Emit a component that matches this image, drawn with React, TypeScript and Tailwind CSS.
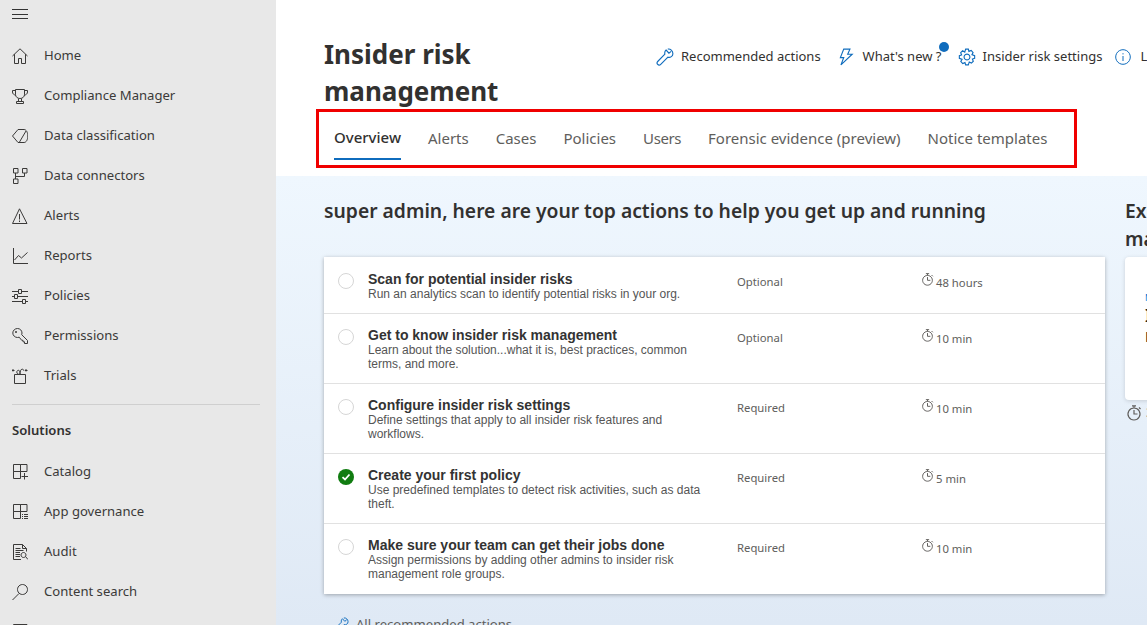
import type { ReactNode } from "react";

const Icon = ({ children, size = 16, className = "" }: { children: ReactNode; size?: number; className?: string }) => (
  <svg width={size} height={size} viewBox="0 0 16 16" fill="none" stroke="currentColor" strokeWidth="1" className={"shrink-0 " + className}>
    {children}
  </svg>
);

const navIcons: Record<string, ReactNode> = {
  home: <path d="M0.5 8L8 0.8L15.5 8M2.5 6.2V15.5H6.5V10.5H9.5V15.5H13.5V6.2" />,
  trophy: <path d="M3.5 1.5H12.5V6.5C12.5 8.8 10.5 10.5 8 10.5C5.5 10.5 3.5 8.8 3.5 6.5ZM3.5 2.5H0.5V4C0.5 5.7 1.8 6.9 4 7.2M12.5 2.5H15.5V4C15.5 5.7 14.2 6.9 12 7.2M6.5 10.5V13.5M9.5 10.5V13.5M4.5 13.5H11.5V15.5H4.5Z" />,
  tag: <path d="M0.5 8L6 1.5H12C14.4 1.5 15.8 4.6 15.8 8C15.8 11.4 14.4 14.5 12 14.5H6ZM7.5 14L14 3" />,
  connectors: <path d="M1.5 0.5H6V5H1.5ZM10.5 0.5H15V5H10.5ZM1.5 11H6V15.5H1.5ZM3.5 5V11M3.5 8.5H12.5V5" />,
  alert: <path d="M7.5 0.8L15 15.5H0.5ZM7.5 6V11.5M7.5 12.5V14" />,
  reports: <path d="M1.5 0V15.5H16M2.5 12L6.5 7.5L9.5 10L15.5 4.5" />,
  policies: <path d="M0 3.5H6.5M9.5 3.5H16M0 8.5H2.5M5.5 8.5H16M0 13.5H10.5M13.5 13.5H16M6.5 1.5H9.5V5.5H6.5ZM2.5 6.5H5.5V10.5H2.5ZM10.5 11.5H13.5V15.5H10.5Z" />,
  key: <path d="M5.5 0.5C8 0.5 10 2.5 10 5C10 5.6 9.9 6.2 9.7 6.7L15.5 12.5V15.5H12.5V13.8H11V12.3H9.7L7.2 9.2C6.7 9.4 6.1 9.5 5.5 9.5C3 9.5 0.8 7.5 0.8 5C0.8 2.5 3 0.5 5.5 0.5ZM3.5 3.5H4.5V4.5H3.5Z" />,
  trials: <path d="M2.5 6.5H13.5V15.5H2.5ZM1 1V3.5M0 2.5H2.5M14 1V3.5M13 2.5H15.5M8 6.5C6 6.5 4.8 5.5 4.8 4C4.8 3 5.6 2.3 6.5 2.3C7.5 2.3 8 3.4 8 6.5ZM8 6.5C8 3.4 8.6 1.2 10.2 1.2C11.3 1.2 11.8 2 11.8 2.8" />,
  catalog: <path d="M1.5 0.5H8.5V7.5H1.5ZM8.5 0.5H15V7.5H8.5ZM1.5 7.5H8.5V14.5H1.5ZM12.5 9V15.5M9.5 12.5H16" />,
  governance: <path d="M1.5 0.5H8.5V7.5H1.5ZM8.5 0.5H15V7.5H8.5ZM1.5 7.5H8.5V14.5H1.5ZM10 10.5H11M12 10.5H16M10 12.5H11M12 12.5H16M10 14.5H11M12 14.5H16" />,
  audit: <path d="M14.5 7.5V4.5L10.5 0.5H1.5V15.5H9M10.5 0.5V4.5H14.5M3.5 4.5H8.5M3.5 6.5H11.5M3.5 8.5H8M3.5 10.5H8M3.5 12.5H8M11.5 8.5A2.5 2.5 0 1 1 11.49 8.5ZM13.5 12.5L16 15.5" />,
  search: <path d="M10.5 0.5A5 5 0 1 1 10.49 0.5ZM7 9.5L0.5 16" />,
  box: <path d="M1.5 0.5H15V15H1.5Z" />,
};

const topNav = [
  ["home", "Home"],
  ["trophy", "Compliance Manager"],
  ["tag", "Data classification"],
  ["connectors", "Data connectors"],
  ["alert", "Alerts"],
  ["reports", "Reports"],
  ["policies", "Policies"],
  ["key", "Permissions"],
  ["trials", "Trials"],
];

const solutionNav = [
  ["catalog", "Catalog"],
  ["governance", "App governance"],
  ["audit", "Audit"],
  ["search", "Content search"],
  ["box", "Communication compliance"],
];

const tabs = ["Overview", "Alerts", "Cases", "Policies", "Users", "Forensic evidence (preview)", "Notice templates"];

const actions = [
  {
    title: "Scan for potential insider risks",
    desc: "Run an analytics scan to identify potential risks in your org.",
    status: "Optional",
    time: "48 hours",
    height: "h-[56px]",
  },
  {
    title: "Get to know insider risk management",
    desc: "Learn about the solution...what it is, best practices, common terms, and more.",
    status: "Optional",
    time: "10 min",
    height: "h-[70px]",
  },
  {
    title: "Configure insider risk settings",
    desc: "Define settings that apply to all insider risk features and workflows.",
    status: "Required",
    time: "10 min",
    height: "h-[70px]",
  },
  {
    title: "Create your first policy",
    desc: "Use predefined templates to detect risk activities, such as data theft.",
    status: "Required",
    time: "5 min",
    height: "h-[70px]",
    done: true,
  },
  {
    title: "Make sure your team can get their jobs done",
    desc: "Assign permissions by adding other admins to insider risk management role groups.",
    status: "Required",
    time: "10 min",
    height: "h-[71px]",
  },
];

const Wrench = ({ size = 18 }: { size?: number }) => (
  <Icon size={size} className="text-[#0f6cbd]">
    <path d="M10.5 1C12.8 0.6 15 2.6 15 5C15 7.3 12.8 8.8 10.6 8.2L4.2 14.6C3.4 15.4 2.2 15.4 1.5 14.6C0.8 13.8 0.8 12.7 1.5 12L7.9 5.5C7.5 3.9 8 2.6 9 1.8L11.5 4.6L13.5 3" />
  </Icon>
);

const Timer = ({ size = 13 }: { size?: number }) => (
  <Icon size={size} className="text-[#605e5c]">
    <path d="M8 3A6 6 0 1 1 7.99 3ZM6 0.8H10M8 0.8V3M13 2.5L14.5 4M8 5V9H11.5" strokeWidth="1.2" />
  </Icon>
);

const NavItem = ({ icon, label }: { icon: string; label: string }) => (
  <div className="flex h-[40px] items-center gap-[16px] pl-[12px] text-[#3b3a39]">
    <Icon>{navIcons[icon]}</Icon>
    <span className="text-[13.1px]">{label}</span>
  </div>
);

export default function App() {
  return (
    <div className="flex h-[625px] w-[1147px] overflow-hidden bg-white font-['Noto_Sans',sans-serif] text-[#323130]">
      <aside className="w-[276px] shrink-0 bg-[#e8e8e8]">
        <div className="flex h-[36px] flex-col gap-[3.5px] pl-[12px] pt-[9px]">
          <div className="h-px w-[16px] bg-[#333]" />
          <div className="h-px w-[16px] bg-[#333]" />
          <div className="h-px w-[16px] bg-[#333]" />
        </div>
        {topNav.map(([icon, label]) => (
          <NavItem key={label} icon={icon} label={label} />
        ))}
        <div className="ml-[12px] mt-[8px] h-px w-[248px] bg-[#cfcfcf]" />
        <div className="flex h-[51px] items-center pl-[12px] text-[13.1px] font-semibold">Solutions</div>
        <div className="-mt-[4px]">
          {solutionNav.map(([icon, label]) => (
            <NavItem key={label} icon={icon} label={label} />
          ))}
        </div>
      </aside>

      <main className="min-w-0 flex-1 overflow-hidden">
        <header className="h-[176px] pl-[48px] pt-[35px]">
          <div className="flex h-[74px]">
            <h1 className="mt-[1px] w-[332px] shrink-0 pr-[100px] text-[26px] font-bold leading-[37px] text-[#323130]">Insider risk management</h1>
            <div className="flex h-[44px] shrink-0 items-center whitespace-nowrap text-[13px]">
              <div className="flex items-center gap-[7px]">
                <Wrench />
                <span>Recommended actions</span>
              </div>
              <div className="relative ml-[16px] flex items-center gap-[8px]">
                <Icon size={18} className="text-[#0f6cbd]">
                  <path d="M6 1H11.5L9.5 5.5H13.5L3.5 15L6 8.5H3Z" />
                </Icon>
                <span>What's new ?</span>
                <div className="absolute -right-[8px] -top-[5px] h-[10px] w-[10px] rounded-full bg-[#0f6cbd]" />
              </div>
              <div className="ml-[17px] flex items-center gap-[6px]">
                <Icon size={18} className="text-[#0f6cbd]">
                  <path d="M6.8 1H9.2L9.7 3L11.7 2.2L13.4 4L12.4 5.9L14.8 6.8V9.2L12.8 9.8L13.6 11.8L11.9 13.4L10 12.4L9.2 15H6.8L6.2 13L4.2 13.8L2.5 12L3.6 10.1L1.2 9.2V6.8L3.2 6.2L2.4 4.2L4.1 2.5L6 3.6ZM8 5.4A2.6 2.6 0 1 1 7.99 5.4Z" />
                </Icon>
                <span>Insider risk settings</span>
              </div>
              <div className="ml-[13px] flex items-center gap-[9px]">
                <Icon size={16} className="text-[#0f6cbd]">
                  <path d="M8 0.7A7.3 7.3 0 1 1 7.99 0.7ZM8 7V12M8 4.2V5.4" />
                </Icon>
                <span>Learn more</span>
              </div>
            </div>
          </div>
          <nav className="-ml-[8px] flex h-[59px] w-[761px] gap-[27px] border-[3px] border-[#f00000] pl-[15px]">
            {tabs.map((tab, i) => (
              <div
                key={tab}
                className={
                  i === 0
                    ? "flex h-[48px] items-center border-b-2 border-[#0f6cbd] pt-[5px] text-[15px] font-medium text-[#323130]"
                    : tab === "Users"
                      ? "flex h-[48px] items-center pt-[4px] text-[15px] tracking-[-0.4px] text-[#605e5c]"
                      : "flex h-[48px] items-center pt-[4px] text-[15px] text-[#605e5c]"
                }
              >
                {tab}
              </div>
            ))}
          </nav>
        </header>

        <section className="h-[449px] bg-gradient-to-b from-[#eff7fe] to-[#dfe9f5] pl-[48px] pt-[21px]">
          <div className="flex w-[1100px] gap-[20px]">
            <div className="w-[781px] shrink-0">
              <h2 className="h-[60px] text-[19.3px] font-semibold leading-[28px]">
                super admin, here are your top actions to help you get up and running
              </h2>
              <div className="bg-white shadow-[0_1px_4px_rgba(0,0,0,0.3)]">
                {actions.map((a) => (
                  <div key={a.title} className={`flex border-t border-[#e1e1e1] pt-[13px] first:border-t-0 first:pt-[14px] ${a.height}`}>
                    <div className="w-[44px] shrink-0 pl-[14px] pt-[2px]">
                      {a.done ? (
                        <div className="flex h-[16px] w-[16px] items-center justify-center rounded-full bg-[#107c10]">
                          <svg width="10" height="10" viewBox="0 0 10 10" fill="none" stroke="white" strokeWidth="1.8">
                            <path d="M1.5 5.2L4 7.5L8.5 2.5" />
                          </svg>
                        </div>
                      ) : (
                        <div className="h-[16px] w-[16px] rounded-full border-[1.5px] border-[#d6d6d6]" />
                      )}
                    </div>
                    <div className="w-[369px] shrink-0 font-['Liberation_Sans',sans-serif]">
                      <div className="text-[14px] font-bold leading-[16px] text-[#333]">{a.title}</div>
                      <div className="max-w-[340px] text-[12px] leading-[14px] text-[#555]">{a.desc}</div>
                    </div>
                    <div className="w-[184px] shrink-0 pt-[3px] text-[11.3px] leading-[16px] text-[#605e5c]">{a.status}</div>
                    <div className="flex items-start gap-[2px] pt-[2px] text-[11.3px] leading-[18px] text-[#605e5c]">
                      <Timer />
                      <span className="pt-[1px]">{a.time}</span>
                    </div>
                  </div>
                ))}
              </div>
              <div className="ml-[10px] mt-[21px] flex items-center gap-[7px] text-[13.1px] text-[#605e5c]">
                <Wrench size={15} />
                <span>All recommended actions</span>
              </div>
            </div>

            <div className="w-[290px] shrink-0">
              <h2 className="h-[60px] text-[19.3px] font-semibold leading-[28px]">Explore insider risk management resources</h2>
              <div className="h-[143px] rounded-[4px] bg-white pl-[20px] pt-[36px] shadow-[0_1px_4px_rgba(0,0,0,0.15)]">
                <div className="text-[9px] leading-[10px] text-[#0078d4]">Microsoft Learn</div>
                <div className="mt-[3px] text-[17px] font-semibold leading-[20px] text-[#201f1e]">Insider risk</div>
                <div className="text-[17px] font-semibold leading-[20px] text-[#201f1e]">management</div>
              </div>
              <div className="ml-[1px] mt-[3px] flex items-center gap-[4px] text-[13px] text-[#605e5c]">
                <Timer size={16} />
                <span>30 min</span>
              </div>
            </div>
          </div>
        </section>
      </main>
    </div>
  );
}
